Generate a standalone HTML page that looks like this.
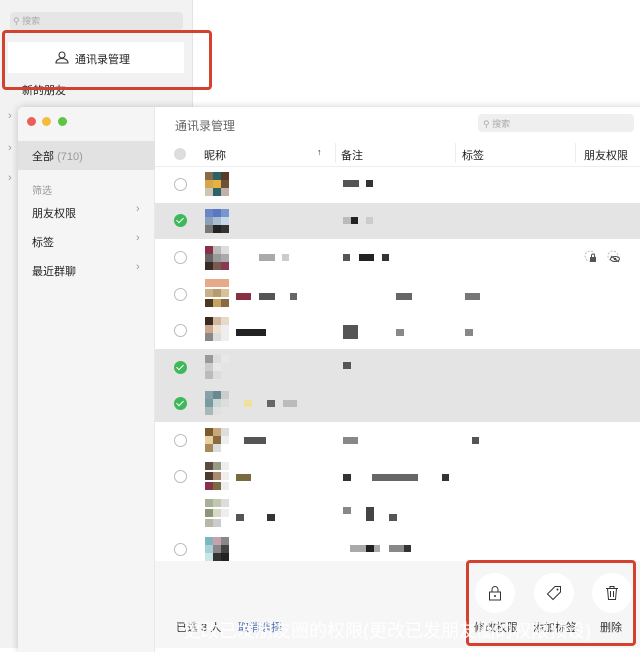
<!DOCTYPE html>
<html><head><meta charset="utf-8"><style>
*{margin:0;padding:0;box-sizing:border-box}
body{width:640px;height:648px;overflow:hidden;position:relative;background:#fff;font-family:"Liberation Sans","Noto Sans CJK SC",sans-serif;color:#222}
.a{position:absolute}
.t{position:absolute;font-size:11px;white-space:nowrap}
.av{position:absolute;width:24px;height:24px;display:grid;grid-template-columns:repeat(3,8px)}
.av i{display:block;width:8px;height:8px}
.cb{position:absolute;width:13px;height:13px;border:1px solid #bbb;border-radius:50%;background:#fff}
.ck{position:absolute;width:13px;height:13px;border-radius:50%;background:#3fb85a}
.ck:after{content:"";position:absolute;left:4px;top:2px;width:3px;height:6px;border:solid #fff;border-width:0 1.5px 1.5px 0;transform:rotate(45deg)}
.px{position:absolute;height:7px}
.circ{position:absolute;width:40px;height:40px;border-radius:50%;background:#fff}
</style></head><body>
<div class="a" style="left:0;top:0;width:193px;height:648px;background:#f2f2f2;border-right:1px solid #e4e4e4"></div>
<div class="a" style="left:10px;top:12px;width:173px;height:18px;background:#e6e6e6;border-radius:4px"></div>
<div class="t" style="left:13px;top:14px;color:#aaa;font-size:9px">⚲ 搜索</div>
<div class="a" style="left:8px;top:42px;width:176px;height:31px;background:#fff"></div>
<svg class="a" style="left:55px;top:51px" width="14" height="13" viewBox="0 0 14 13"><circle cx="7" cy="4" r="3" fill="none" stroke="#333" stroke-width="1.1"/><path d="M1 12c0-3 3-4.5 6-4.5s6 1.5 6 4.5z" fill="none" stroke="#333" stroke-width="1.1"/></svg>
<div class="t" style="left:75px;top:51px;font-size:11px">通讯录管理</div>
<div class="t" style="left:22px;top:82px;font-size:11px">新的朋友</div>
<div class="t" style="left:8px;top:110px;color:#999">›</div>
<div class="t" style="left:8px;top:142px;color:#999">›</div>
<div class="t" style="left:8px;top:172px;color:#999">›</div>
<div class="a" style="left:2px;top:30px;width:210px;height:60px;border:3px solid #d5412f;border-radius:4px"></div>
<div class="a" style="left:18px;top:107px;width:630px;height:545px;background:#fff;box-shadow:0 0 8px rgba(0,0,0,.2);border-radius:5px 0 0 0;overflow:hidden">
 <div class="a" style="left:0;top:0;width:137px;height:545px;background:#f5f5f5;border-right:1px solid #e8e8e8"></div>
 <div class="a" style="left:9px;top:10px;width:9px;height:9px;border-radius:50%;background:#ec5f57"></div>
 <div class="a" style="left:24px;top:10px;width:9px;height:9px;border-radius:50%;background:#f2bd3d"></div>
 <div class="a" style="left:40px;top:10px;width:9px;height:9px;border-radius:50%;background:#5cc544"></div>
 <div class="a" style="left:0;top:34px;width:137px;height:29px;background:#e2e2e2"></div>
 <div class="t" style="left:14px;top:41px">全部 <span style="color:#999">(710)</span></div>
 <div class="t" style="left:14px;top:75px;color:#999;font-size:10px">筛选</div>
 <div class="t" style="left:14px;top:98px">朋友权限</div><div class="t" style="left:118px;top:96px;color:#999">›</div>
 <div class="t" style="left:14px;top:127px">标签</div><div class="t" style="left:118px;top:125px;color:#999">›</div>
 <div class="t" style="left:14px;top:156px">最近群聊</div><div class="t" style="left:118px;top:154px;color:#999">›</div>
 <div class="t" style="left:157px;top:10px;color:#666;font-size:12px">通讯录管理</div>
 <div class="a" style="left:460px;top:7px;width:156px;height:18px;background:#efefef;border-radius:4px"></div>
 <div class="t" style="left:465px;top:10px;color:#aaa;font-size:9px">⚲ 搜索</div>
</div>
<div class="a" style="left:174px;top:148px;width:12px;height:12px;border-radius:50%;background:#ddd"></div>
<div class="t" style="left:204px;top:147px;font-size:11px">昵称</div>
<div class="t" style="left:317px;top:147px;font-size:9px">↑</div>
<div class="t" style="left:341px;top:147px">备注</div>
<div class="t" style="left:462px;top:147px">标签</div>
<div class="t" style="left:584px;top:147px">朋友权限</div>
<div class="a" style="left:335px;top:143px;width:1px;height:20px;background:#eee"></div>
<div class="a" style="left:455px;top:143px;width:1px;height:20px;background:#eee"></div>
<div class="a" style="left:575px;top:143px;width:1px;height:20px;background:#eee"></div>
<div class="a" style="left:155px;top:166px;width:485px;height:1px;background:#eee"></div>
<div class="a" style="left:155px;top:203px;width:485px;height:36px;background:#e4e4e4"></div>
<div class="a" style="left:155px;top:349px;width:485px;height:73px;background:#e4e4e4"></div>
<div class="cb" style="left:174px;top:178px"></div>
<div class="ck" style="left:174px;top:214px"></div>
<div class="cb" style="left:174px;top:251px"></div>
<div class="cb" style="left:174px;top:288px"></div>
<div class="cb" style="left:174px;top:324px"></div>
<div class="ck" style="left:174px;top:361px"></div>
<div class="ck" style="left:174px;top:397px"></div>
<div class="cb" style="left:174px;top:434px"></div>
<div class="cb" style="left:174px;top:470px"></div>
<div class="cb" style="left:174px;top:543px"></div>
<div class="av" style="left:205px;top:172px"><i style="background:#8a6a4a"></i><i style="background:#2a6468"></i><i style="background:#5a3a26"></i><i style="background:#d6a74a"></i><i style="background:#e8b040"></i><i style="background:#6e5038"></i><i style="background:#cfc4b6"></i><i style="background:#2a6468"></i><i style="background:#bfb0a8"></i></div>
<div class="av" style="left:205px;top:209px"><i style="background:#6a86c8"></i><i style="background:#5a78c0"></i><i style="background:#7a96d0"></i><i style="background:#8aa0b8"></i><i style="background:#a8bed0"></i><i style="background:#c8d8e8"></i><i style="background:#777"></i><i style="background:#222"></i><i style="background:#333"></i></div>
<div class="av" style="left:205px;top:246px"><i style="background:#8a3048"></i><i style="background:#bbb"></i><i style="background:#ddd"></i><i style="background:#666"></i><i style="background:#999"></i><i style="background:#aaa"></i><i style="background:#3a2a26"></i><i style="background:#7a5a50"></i><i style="background:#8a3a50"></i></div>
<div class="av" style="left:205px;top:279px;height:30px"><i style="background:#e8a88a"></i><i style="background:#e8a88a"></i><i style="background:#e8a88a"></i><i style="background:#c8b088"></i><i style="background:#b89a70"></i><i style="background:#d8c098"></i><i style="background:#4a3a20"></i><i style="background:#c8a060"></i><i style="background:#8a6a40"></i></div>
<div class="av" style="left:205px;top:317px"><i style="background:#3a2a20"></i><i style="background:#d0b8a0"></i><i style="background:#e8d8c8"></i><i style="background:#c8a890"></i><i style="background:#f0e0d0"></i><i style="background:#eee"></i><i style="background:#888"></i><i style="background:#ddd"></i><i style="background:#eee"></i></div>
<div class="av" style="left:205px;top:355px"><i style="background:#999"></i><i style="background:#ddd"></i><i style="background:#e8e8e8"></i><i style="background:#ccc"></i><i style="background:#e8e8e8"></i><i style="background:#e4e4e4"></i><i style="background:#bbb"></i><i style="background:#ddd"></i><i style="background:#e4e4e4"></i></div>
<div class="av" style="left:205px;top:391px"><i style="background:#88a0a8"></i><i style="background:#6a8890"></i><i style="background:#ccc"></i><i style="background:#7a9aa0"></i><i style="background:#c8d8d8"></i><i style="background:#ddd"></i><i style="background:#a8b8b8"></i><i style="background:#e0e0e0"></i><i style="background:#e4e4e4"></i></div>
<div class="av" style="left:205px;top:428px"><i style="background:#7a5a30"></i><i style="background:#c8a878"></i><i style="background:#ddd"></i><i style="background:#e8d0a0"></i><i style="background:#8a6a40"></i><i style="background:#eee"></i><i style="background:#a88a58"></i><i style="background:#ddd"></i><i style="background:#fff"></i></div>
<div class="av" style="left:205px;top:462px;height:30px"><i style="background:#5a4a40"></i><i style="background:#998"></i><i style="background:#eee"></i><i style="background:#4a3a30"></i><i style="background:#a88a70"></i><i style="background:#eee"></i><i style="background:#8a3048"></i><i style="background:#7a6a40"></i><i style="background:#eee"></i></div>
<div class="av" style="left:205px;top:499px;height:30px"><i style="background:#a8b098"></i><i style="background:#c0c8b0"></i><i style="background:#ddd"></i><i style="background:#8a9878"></i><i style="background:#d8d8c8"></i><i style="background:#eee"></i><i style="background:#b8b8a8"></i><i style="background:#ccc"></i><i style="background:#fff"></i></div>
<div class="av" style="left:205px;top:537px"><i style="background:#7ab8c0"></i><i style="background:#c8a0b0"></i><i style="background:#888"></i><i style="background:#a8d0d8"></i><i style="background:#888"></i><i style="background:#444"></i><i style="background:#c8e8e8"></i><i style="background:#333"></i><i style="background:#222"></i></div>
<div class="px" style="left:343px;top:180px;width:16px;background:#555"></div><div class="px" style="left:366px;top:180px;width:7px;background:#333"></div>
<div class="px" style="left:343px;top:217px;width:8px;background:#bbb"></div><div class="px" style="left:351px;top:217px;width:7px;background:#222"></div><div class="px" style="left:366px;top:217px;width:7px;background:#ccc"></div>
<div class="px" style="left:259px;top:254px;width:16px;background:#aaa"></div><div class="px" style="left:282px;top:254px;width:7px;background:#ccc"></div>
<div class="px" style="left:343px;top:254px;width:7px;background:#555"></div><div class="px" style="left:359px;top:254px;width:15px;background:#222"></div><div class="px" style="left:382px;top:254px;width:7px;background:#333"></div>
<div class="px" style="left:236px;top:293px;width:15px;background:#8a3040"></div><div class="px" style="left:259px;top:293px;width:16px;background:#555"></div><div class="px" style="left:290px;top:293px;width:7px;background:#666"></div><div class="px" style="left:396px;top:293px;width:16px;background:#666"></div><div class="px" style="left:465px;top:293px;width:15px;background:#777"></div>
<div class="px" style="left:236px;top:329px;width:30px;background:#222"></div><div class="px" style="left:343px;top:325px;width:15px;height:14px;background:#555"></div><div class="px" style="left:396px;top:329px;width:8px;background:#888"></div><div class="px" style="left:465px;top:329px;width:8px;background:#888"></div>
<div class="px" style="left:343px;top:362px;width:8px;background:#555"></div>
<div class="px" style="left:244px;top:400px;width:8px;background:#f0e0a0"></div><div class="px" style="left:267px;top:400px;width:8px;background:#666"></div><div class="px" style="left:283px;top:400px;width:14px;background:#bbb"></div>
<div class="px" style="left:244px;top:437px;width:22px;background:#555"></div><div class="px" style="left:343px;top:437px;width:15px;background:#888"></div><div class="px" style="left:472px;top:437px;width:7px;background:#555"></div>
<div class="px" style="left:236px;top:474px;width:15px;background:#7a6a40"></div><div class="px" style="left:343px;top:474px;width:8px;background:#333"></div><div class="px" style="left:372px;top:474px;width:46px;background:#666"></div><div class="px" style="left:442px;top:474px;width:7px;background:#333"></div>
<div class="px" style="left:236px;top:514px;width:8px;background:#555"></div><div class="px" style="left:267px;top:514px;width:8px;background:#333"></div><div class="px" style="left:343px;top:507px;width:8px;background:#888"></div><div class="px" style="left:366px;top:507px;width:8px;height:14px;background:#444"></div><div class="px" style="left:389px;top:514px;width:8px;background:#555"></div>
<div class="px" style="left:350px;top:545px;width:30px;background:#aaa"></div><div class="px" style="left:366px;top:545px;width:8px;background:#222"></div><div class="px" style="left:389px;top:545px;width:22px;background:#888"></div><div class="px" style="left:404px;top:545px;width:7px;background:#333"></div>
<svg class="a" style="left:584px;top:250px" width="14" height="14" viewBox="0 0 14 14"><circle cx="6" cy="6" r="5" fill="none" stroke="#bbb" stroke-dasharray="2 1.5"/><rect x="6" y="7" width="6" height="5" fill="#555"/><path d="M7.5 7V5.5a1.5 1.5 0 0 1 3 0V7" fill="none" stroke="#555"/></svg>
<svg class="a" style="left:607px;top:250px" width="14" height="14" viewBox="0 0 14 14"><circle cx="6" cy="6" r="5" fill="none" stroke="#bbb" stroke-dasharray="2 1.5"/><ellipse cx="8" cy="9" rx="4.5" ry="2.5" fill="none" stroke="#444"/><circle cx="8" cy="9" r="1.2" fill="#444"/><path d="M4 6l8 6" stroke="#444"/></svg>
<div class="a" style="left:155px;top:561px;width:485px;height:87px;background:#f6f6f6"></div>
<div class="t" style="left:176px;top:619px;font-size:11px;color:#333">已选 3 人</div>
<div class="t" style="left:238px;top:619px;font-size:11px;color:#4a6aa8">取消选择</div>
<div class="circ" style="left:475px;top:573px"></div>
<div class="circ" style="left:534px;top:573px"></div>
<div class="circ" style="left:592px;top:573px"></div>
<svg class="a" style="left:488px;top:585px" width="14" height="16" viewBox="0 0 14 16"><rect x="1.5" y="7" width="11" height="8" fill="none" stroke="#333"/><path d="M4 7V4.5a3 3 0 0 1 6 0V7" fill="none" stroke="#333"/><circle cx="7" cy="11" r="1" fill="#333"/></svg>
<svg class="a" style="left:546px;top:585px" width="16" height="16" viewBox="0 0 16 16"><path d="M9 1.5h5.5V7L7 14.5 1.5 9z" fill="none" stroke="#333"/><circle cx="11.5" cy="4.5" r="1" fill="#333"/></svg>
<svg class="a" style="left:605px;top:585px" width="14" height="16" viewBox="0 0 14 16"><path d="M1 3.5h12M5 3.5V1.5h4v2M2.5 3.5l1 11h7l1-11M5.5 6v6M8.5 6v6" fill="none" stroke="#333"/></svg>
<div class="t" style="left:474px;top:619px;font-size:11px;color:#333">修改权限</div>
<div class="t" style="left:533px;top:619px;font-size:11px;color:#333">添加标签</div>
<div class="t" style="left:600px;top:619px;font-size:11px;color:#333">删除</div>
<div class="a" style="left:466px;top:560px;width:170px;height:86px;border:3px solid #d5412f;border-radius:4px"></div>
<div class="t" style="left:183px;top:617px;font-size:18px;color:rgba(255,255,255,.92)">更改已发朋友圈的权限(更改已发朋友圈的权限预设)</div>
</body></html>
